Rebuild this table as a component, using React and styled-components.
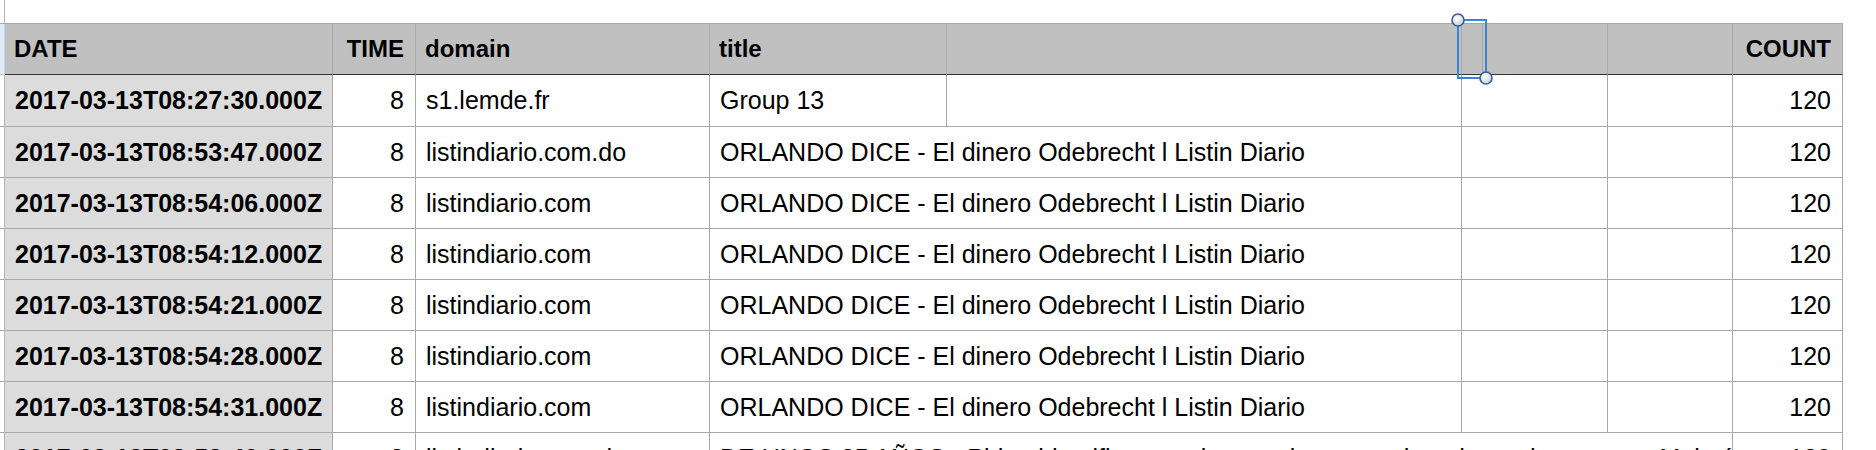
import React from 'react'
import styled, { createGlobalStyle } from 'styled-components'

const GRID = '#a9a9a9'

const GlobalStyle = createGlobalStyle`
  html, body {
    margin: 0;
    padding: 0;
    background: #fff;
  }
  body {
    font-family: 'Liberation Sans', Arial, Helvetica, sans-serif;
    color: #000;
    overflow: hidden;
  }
`

// widths of the sheet columns, left to right (gutter excluded)
const COLS = [328, 83, 294, 237, 515, 21, 125, 125, 110]

const header = [
  { text: 'DATE' },
  { text: 'TIME', right: true },
  { text: 'domain' },
  { text: 'title' },
  { text: '' },
  { text: '' },
  { text: '' },
  { text: '' },
  { text: 'COUNT', right: true },
]

const ORLANDO = 'ORLANDO DICE - El dinero Odebrecht l Listin Diario'

const rows = [
  { date: '2017-03-13T08:27:30.000Z', domain: 's1.lemde.fr', title: 'Group 13', span: 1 },
  { date: '2017-03-13T08:53:47.000Z', domain: 'listindiario.com.do', title: ORLANDO, span: 2 },
  { date: '2017-03-13T08:54:06.000Z', domain: 'listindiario.com', title: ORLANDO, span: 2 },
  { date: '2017-03-13T08:54:12.000Z', domain: 'listindiario.com', title: ORLANDO, span: 2 },
  { date: '2017-03-13T08:54:21.000Z', domain: 'listindiario.com', title: ORLANDO, span: 2 },
  { date: '2017-03-13T08:54:28.000Z', domain: 'listindiario.com', title: ORLANDO, span: 2 },
  { date: '2017-03-13T08:54:31.000Z', domain: 'listindiario.com', title: ORLANDO, span: 2 },
  {
    date: '2017-03-13T08:58:40.000Z',
    domain: 'listindiario.com.do',
    title: 'DE UNOS 25 AÑOS - Piden identificar a quienes roban cosechas de productores en Maimón',
    span: 5,
  },
]

const App = () => (
  <Page>
    <GlobalStyle />
    <TopStrip>
      <GutterStub />
      <Caption>
        <CaptionText>Table 1</CaptionText>
      </Caption>
    </TopStrip>
    <Sheet>
      <GutterCell $head />
      {header.map((h, i) => (
        <HeadCell key={i} $right={h.right}>
          {h.text}
        </HeadCell>
      ))}
      {rows.map((r, ri) => (
        <React.Fragment key={ri}>
          <GutterCell />
          <Cell $shade $bold>
            {r.date}
          </Cell>
          <Cell $right>8</Cell>
          <Cell>{r.domain}</Cell>
          <Cell $span={r.span}>{r.title}</Cell>
          {Array.from({ length: 5 - r.span }).map((_, k) => (
            <Cell key={k} />
          ))}
          <Cell $right>120</Cell>
        </React.Fragment>
      ))}
    </Sheet>
    <Selection width="44" height="76" viewBox="0 0 44 76">
      <defs>
        <radialGradient id="knob" cx="40%" cy="35%" r="70%">
          <stop offset="0%" stopColor="#ffffff" />
          <stop offset="100%" stopColor="#c9ccd3" />
        </radialGradient>
      </defs>
      <rect x="8" y="8" width="28" height="58" fill="none" stroke="#3a85d6" strokeWidth="2" />
      <circle cx="8" cy="8" r="6" fill="url(#knob)" stroke="#3c5b99" strokeWidth="1.6" />
      <circle cx="36" cy="66" r="6" fill="url(#knob)" stroke="#3c5b99" strokeWidth="1.6" />
    </Selection>
  </Page>
)

const Page = styled.div`
  position: relative;
  width: 1876px;
  height: 450px;
  overflow: hidden;
`

const TopStrip = styled.div`
  display: flex;
  height: 23px;
`

const GutterStub = styled.div`
  width: 5px;
  box-sizing: border-box;
  border-right: 1px solid #b4b4b4;
`

const Caption = styled.div`
  width: 1838px;
  overflow: hidden;
  display: flex;
  justify-content: center;
`

const CaptionText = styled.div`
  font-size: 24px;
  line-height: 24px;
  font-weight: bold;
  color: #777;
  margin-top: -20px;
`

const Sheet = styled.div`
  display: grid;
  grid-template-columns: 5px ${COLS.map((w) => `${w}px`).join(' ')};
  grid-template-rows: 51px 52px;
  grid-auto-rows: 51px;
  width: ${5 + COLS.reduce((a, b) => a + b, 0)}px;
  border-top: 1px solid ${GRID};
`

const GutterCell = styled.div`
  box-sizing: border-box;
  border-right: 1px solid ${(p) => (p.$head ? '#c3d3e8' : '#b4b4b4')};
  border-bottom: 1px solid ${(p) => (p.$head ? '#c3d3e8' : GRID)};
  background: ${(p) => (p.$head ? '#e2ecf8' : '#fff')};
`

const HeadCell = styled.div`
  box-sizing: border-box;
  display: flex;
  align-items: center;
  justify-content: ${(p) => (p.$right ? 'flex-end' : 'flex-start')};
  padding: 0 11px 0 9px;
  background: #bfc0bf;
  border-right: 1px solid ${GRID};
  border-bottom: 1px solid #333;
  font-size: 24px;
  font-weight: bold;
  white-space: nowrap;
  overflow: hidden;
`

const Cell = styled.div`
  box-sizing: border-box;
  grid-column: span ${(p) => p.$span || 1};
  display: flex;
  align-items: center;
  justify-content: ${(p) => (p.$right ? 'flex-end' : 'flex-start')};
  padding: 0 11px 0 10px;
  background: ${(p) => (p.$shade ? '#dcdcdc' : '#fff')};
  border-right: 1px solid ${GRID};
  border-bottom: 1px solid ${GRID};
  font-size: 25px;
  font-weight: ${(p) => (p.$bold ? 'bold' : 'normal')};
  white-space: nowrap;
  overflow: hidden;
`

const Selection = styled.svg`
  position: absolute;
  left: 1450px;
  top: 12px;
`

export default App
